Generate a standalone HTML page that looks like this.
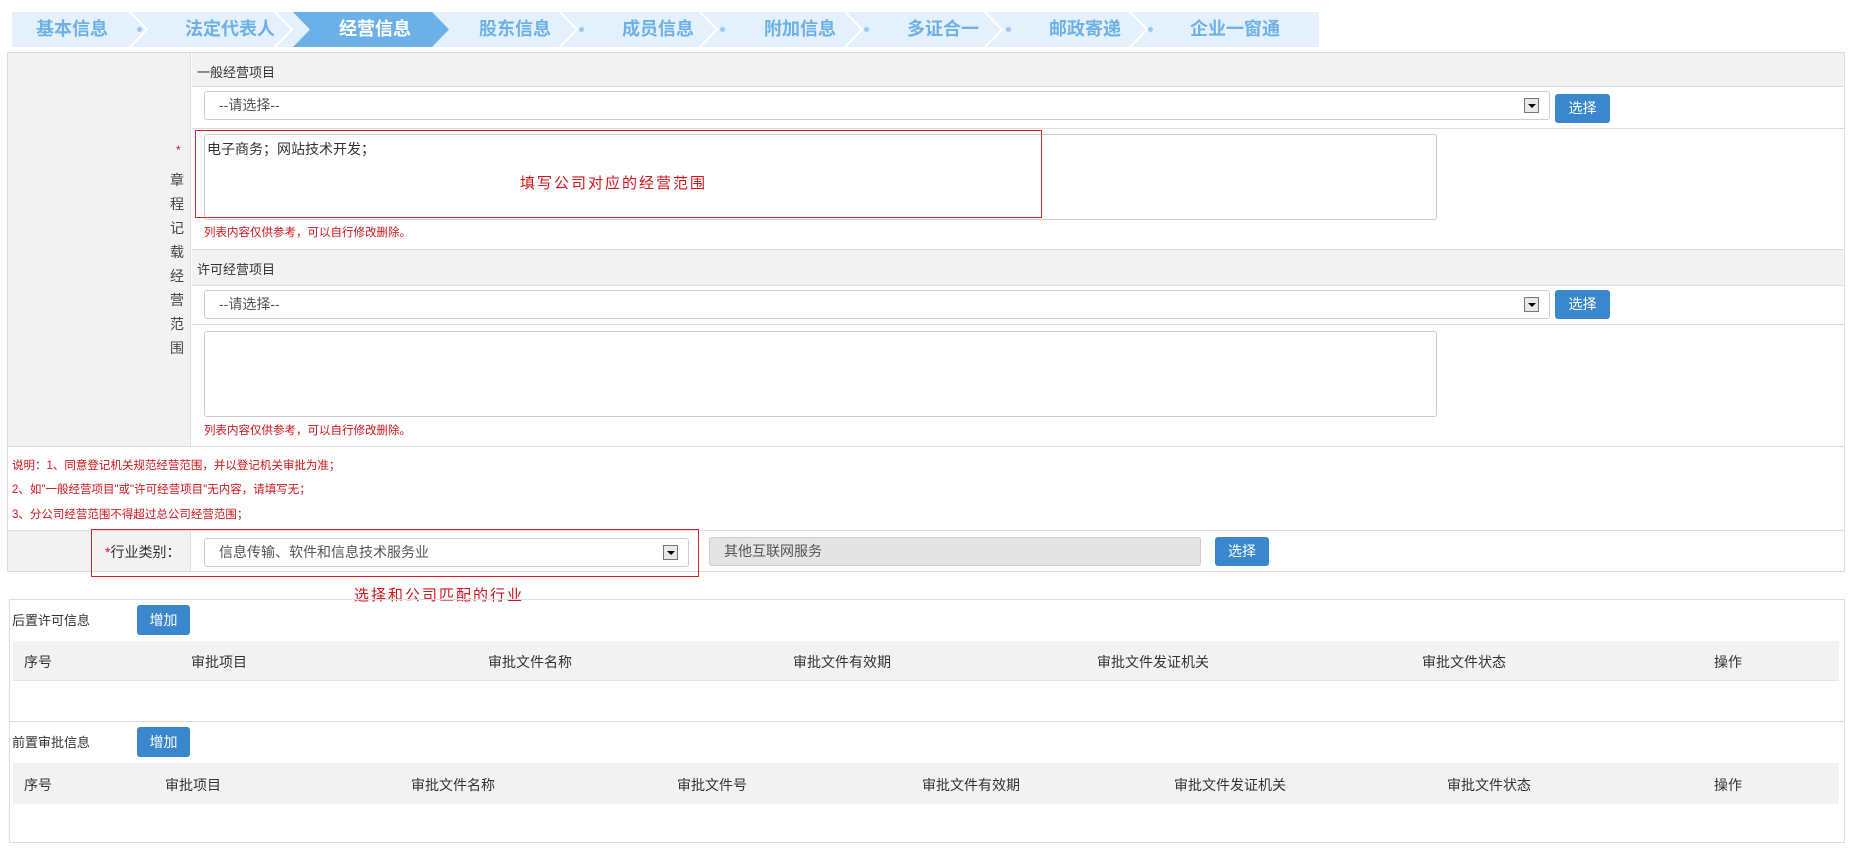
<!DOCTYPE html>
<html><head><meta charset="utf-8"><style>
*{margin:0;padding:0;box-sizing:border-box}
body{width:1853px;height:852px;background:#fff;position:relative;font-family:"Liberation Sans","Noto Sans CJK SC",sans-serif;font-size:14px;color:#333;overflow:hidden}
.a{position:absolute}
.tab{position:absolute;top:12px;height:35px;line-height:35px;color:#6cb0e6;font-weight:bold;font-size:18px;text-align:center}
.dot{position:absolute;top:27px;width:5px;height:5px;border-radius:50%;background:#9cc8ee}
.sel{position:absolute;background:#fff;border:1px solid #ccc;border-radius:3px;height:29px;line-height:27px;padding-left:14px;font-size:14px;color:#555}
.sel i{position:absolute;right:10px;top:6px;width:15px;height:15px;border:1px solid #777;background:#e8e8e8}
.sel i:after{content:"";position:absolute;left:3px;top:5px;border:4px solid transparent;border-top:4px solid #000}
.btn{position:absolute;background:#3a87cd;color:#fff;border-radius:3px;text-align:center;font-size:14px}
.ta{position:absolute;border:1px solid #ccc;border-radius:3px;background:#fff}
.red{color:#d0141a}
.note{position:absolute;font-size:11.5px;color:#d0141a}
.gh{position:absolute;background:#f2f2f2}
.th{position:absolute;font-size:14px;color:#333}
</style></head><body>
<div class="a" style="left:12px;top:12px;width:1307px;height:35px;background:#e4f0fb"></div>
<svg class="a" style="left:0;top:12px" width="1330" height="35">
<polygon points="293,0 432,0 449,17.5 432,35 293,35 310,17.5" fill="#6cb0e8"/>
<g fill="none" stroke="#fff" stroke-width="2">
<polyline points="130,0 147,17.5 130,35"/><polyline points="275,0 292,17.5 275,35"/>
<polyline points="560,0 577,17.5 560,35"/><polyline points="700,0 717,17.5 700,35"/>
<polyline points="845,0 862,17.5 845,35"/><polyline points="985,0 1002,17.5 985,35"/>
<polyline points="1130,0 1147,17.5 1130,35"/></g></svg>
<div class="tab" style="left:22px;width:100px">基本信息</div>
<div class="dot" style="left:137px"></div>
<div class="tab" style="left:170px;width:120px">法定代表人</div>
<div class="tab" style="left:325px;width:100px;color:#fff">经营信息</div>
<div class="tab" style="left:465px;width:100px">股东信息</div>
<div class="dot" style="left:579px"></div>
<div class="tab" style="left:608px;width:100px">成员信息</div>
<div class="dot" style="left:720px"></div>
<div class="tab" style="left:750px;width:100px">附加信息</div>
<div class="dot" style="left:864px"></div>
<div class="tab" style="left:893px;width:100px">多证合一</div>
<div class="dot" style="left:1006px"></div>
<div class="tab" style="left:1035px;width:100px">邮政寄递</div>
<div class="dot" style="left:1148px"></div>
<div class="tab" style="left:1180px;width:110px">企业一窗通</div>

<!-- main box -->
<div class="a" style="left:7px;top:52px;width:1838px;height:520px;border:1px solid #ddd"></div>
<div class="gh" style="left:8px;top:53px;width:183px;height:393px;border-right:1px solid #ddd"></div>
<div class="gh" style="left:192px;top:53px;width:1652px;height:34px;border-bottom:1px solid #ddd"></div>
<div class="a" style="left:197px;top:62px;font-size:13px">一般经营项目</div>
<div class="sel" style="left:204px;top:91px;width:1346px">--请选择--<i></i></div>
<div class="btn" style="left:1555px;top:94px;width:55px;height:29px;line-height:29px">选择</div>
<div class="a" style="left:192px;top:128px;width:1652px;border-top:1px solid #ddd"></div>
<div class="ta" style="left:204px;top:134px;width:1233px;height:86px"></div>
<div class="a" style="left:207px;top:139px;font-size:14px">电子商务；网站技术开发；</div>
<div class="a" style="left:195px;top:130px;width:847px;height:88px;border:1.5px solid #d8232a"></div>
<div class="a red" style="left:520px;top:172px;font-size:15px;letter-spacing:2px">填写公司对应的经营范围</div>
<div class="note" style="left:204px;top:224px">列表内容仅供参考，可以自行修改删除。</div>
<div class="gh" style="left:192px;top:249px;width:1652px;height:37px;border-top:1px solid #ddd;border-bottom:1px solid #ddd"></div>
<div class="a" style="left:197px;top:259px;font-size:13px">许可经营项目</div>
<div class="sel" style="left:204px;top:290px;width:1346px">--请选择--<i></i></div>
<div class="btn" style="left:1555px;top:290px;width:55px;height:29px;line-height:29px">选择</div>
<div class="a" style="left:192px;top:324px;width:1652px;border-top:1px solid #ddd"></div>
<div class="ta" style="left:204px;top:331px;width:1233px;height:86px"></div>
<div class="note" style="left:204px;top:422px">列表内容仅供参考，可以自行修改删除。</div>
<div class="a red" style="left:176px;top:143px;font-size:12px">*</div>
<div class="a" style="left:167px;top:168px;width:20px;font-size:14px;line-height:24px;text-align:center;color:#444">章<br>程<br>记<br>载<br>经<br>营<br>范<br>围</div>
<div class="a" style="left:8px;top:446px;width:1836px;border-top:1px solid #ddd"></div>
<div class="note" style="left:12px;top:457px">说明：1、同意登记机关规范经营范围，并以登记机关审批为准；</div>
<div class="note" style="left:12px;top:481px">2、如"一般经营项目"或"许可经营项目"无内容，请填写无；</div>
<div class="note" style="left:12px;top:506px">3、分公司经营范围不得超过总公司经营范围；</div>
<div class="a" style="left:8px;top:530px;width:1836px;border-top:1px solid #ddd"></div>
<div class="gh" style="left:8px;top:531px;width:183px;height:40px;border-right:1px solid #ddd"></div>
<div class="a" style="left:105px;top:542px;font-size:14px"><span class="red">*</span>行业类别：</div>
<div class="sel" style="left:204px;top:538px;width:485px">信息传输、软件和信息技术服务业<i></i></div>
<div class="a" style="left:709px;top:537px;width:492px;height:29px;background:#e4e4e4;border:1px solid #ccc;border-radius:3px;line-height:27px;padding-left:14px;color:#555">其他互联网服务</div>
<div class="btn" style="left:1215px;top:537px;width:54px;height:29px;line-height:29px">选择</div>
<div class="a" style="left:91px;top:529px;width:608px;height:48px;border:1.5px solid #d8232a"></div>
<div class="a red" style="left:354px;top:584px;font-size:15px;letter-spacing:2px">选择和公司匹配的行业</div>

<!-- section 2 -->
<div class="a" style="left:9px;top:599px;width:1836px;height:244px;border:1px solid #ddd"></div>
<div class="a" style="left:9px;top:721px;width:1836px;border-top:1px solid #ddd"></div>
<div class="a" style="left:12px;top:610px;font-size:13px">后置许可信息</div>
<div class="btn" style="left:137px;top:605px;width:53px;height:30px;line-height:30px">增加</div>
<div class="gh" style="left:13px;top:641px;width:1826px;height:40px;border-bottom:1px solid #e4e4e4"></div>
<div class="th" style="left:24px;top:652px">序号</div>
<div class="th" style="left:191px;top:652px">审批项目</div>
<div class="th" style="left:488px;top:652px">审批文件名称</div>
<div class="th" style="left:793px;top:652px">审批文件有效期</div>
<div class="th" style="left:1097px;top:652px">审批文件发证机关</div>
<div class="th" style="left:1422px;top:652px">审批文件状态</div>
<div class="th" style="left:1714px;top:652px">操作</div>
<div class="a" style="left:12px;top:732px;font-size:13px">前置审批信息</div>
<div class="btn" style="left:137px;top:727px;width:53px;height:30px;line-height:30px">增加</div>
<div class="gh" style="left:13px;top:763px;width:1826px;height:41px"></div>
<div class="th" style="left:24px;top:775px">序号</div>
<div class="th" style="left:165px;top:775px">审批项目</div>
<div class="th" style="left:411px;top:775px">审批文件名称</div>
<div class="th" style="left:677px;top:775px">审批文件号</div>
<div class="th" style="left:922px;top:775px">审批文件有效期</div>
<div class="th" style="left:1174px;top:775px">审批文件发证机关</div>
<div class="th" style="left:1447px;top:775px">审批文件状态</div>
<div class="th" style="left:1714px;top:775px">操作</div>
</body></html>
